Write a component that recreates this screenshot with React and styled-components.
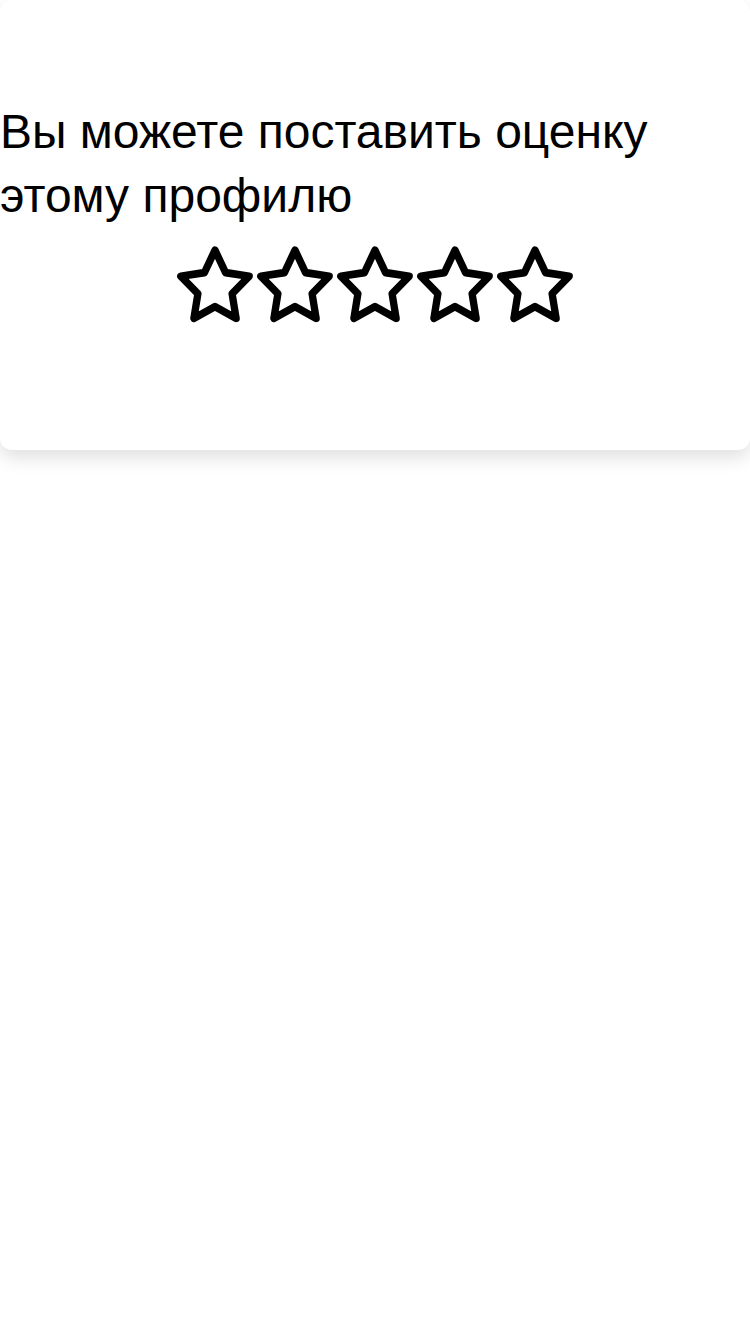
import React from 'react'
import styled, { createGlobalStyle } from 'styled-components'

const GlobalStyle = createGlobalStyle`
    html, body {
        margin : 0;
        padding : 0;
        background-color: #ffffff;
        font-family : "Liberation Sans", Arial, sans-serif;
    }
`

const Page = styled.div`
    min-height : 100vh;
    background-color: #ffffff;
    padding-bottom : 40px;
    box-sizing : border-box;
`

const Card = styled.div`
    box-sizing : border-box;
    width : 100%;
    height : 450px;
    padding-top : 100px;
    background-color: #ffffff;
    border-radius : 12px;
    box-shadow : 0 8px 18px rgba(0, 0, 0, 0.12);
    display : flex;
    flex-direction : column;
`

const Title = styled.div`
    font-size : 48px;
    line-height : 64px;
    color : #000000;
    padding-right : 40px;
`

const Stars = styled.div`
    display : flex;
    justify-content : center;
    margin-top : 18px;
`

const StarButton = styled.button`
    width : 80px;
    height : 80px;
    padding : 0;
    border : 0;
    background : transparent;
    cursor : pointer;
    display : flex;
    align-items : center;
    justify-content : center;
    overflow : visible;
    svg {
        flex-shrink : 0;
        width : 82px;
        height : 86px;
    }
`

const Star = () => (
    <svg viewBox='0 0 24 24' preserveAspectRatio='none' fill='none' stroke='#000' strokeWidth='2.15' strokeLinejoin='round' strokeLinecap='round'>
        <polygon points='12 2 15.09 8.26 22 9.27 17 14.14 18.18 21.02 12 17.77 5.82 21.02 7 14.14 2 9.27 8.91 8.26 12 2' />
    </svg>
)

export default function App () {
    return (
        <Page>
            <GlobalStyle />
            <Card>
                <Title>Вы можете поставить оценку этому профилю</Title>
                <Stars>
                    {[1, 2, 3, 4, 5].map(n => (
                        <StarButton key={n} aria-label={`${n}`}>
                            <Star />
                        </StarButton>
                    ))}
                </Stars>
            </Card>
        </Page>
    )
}
